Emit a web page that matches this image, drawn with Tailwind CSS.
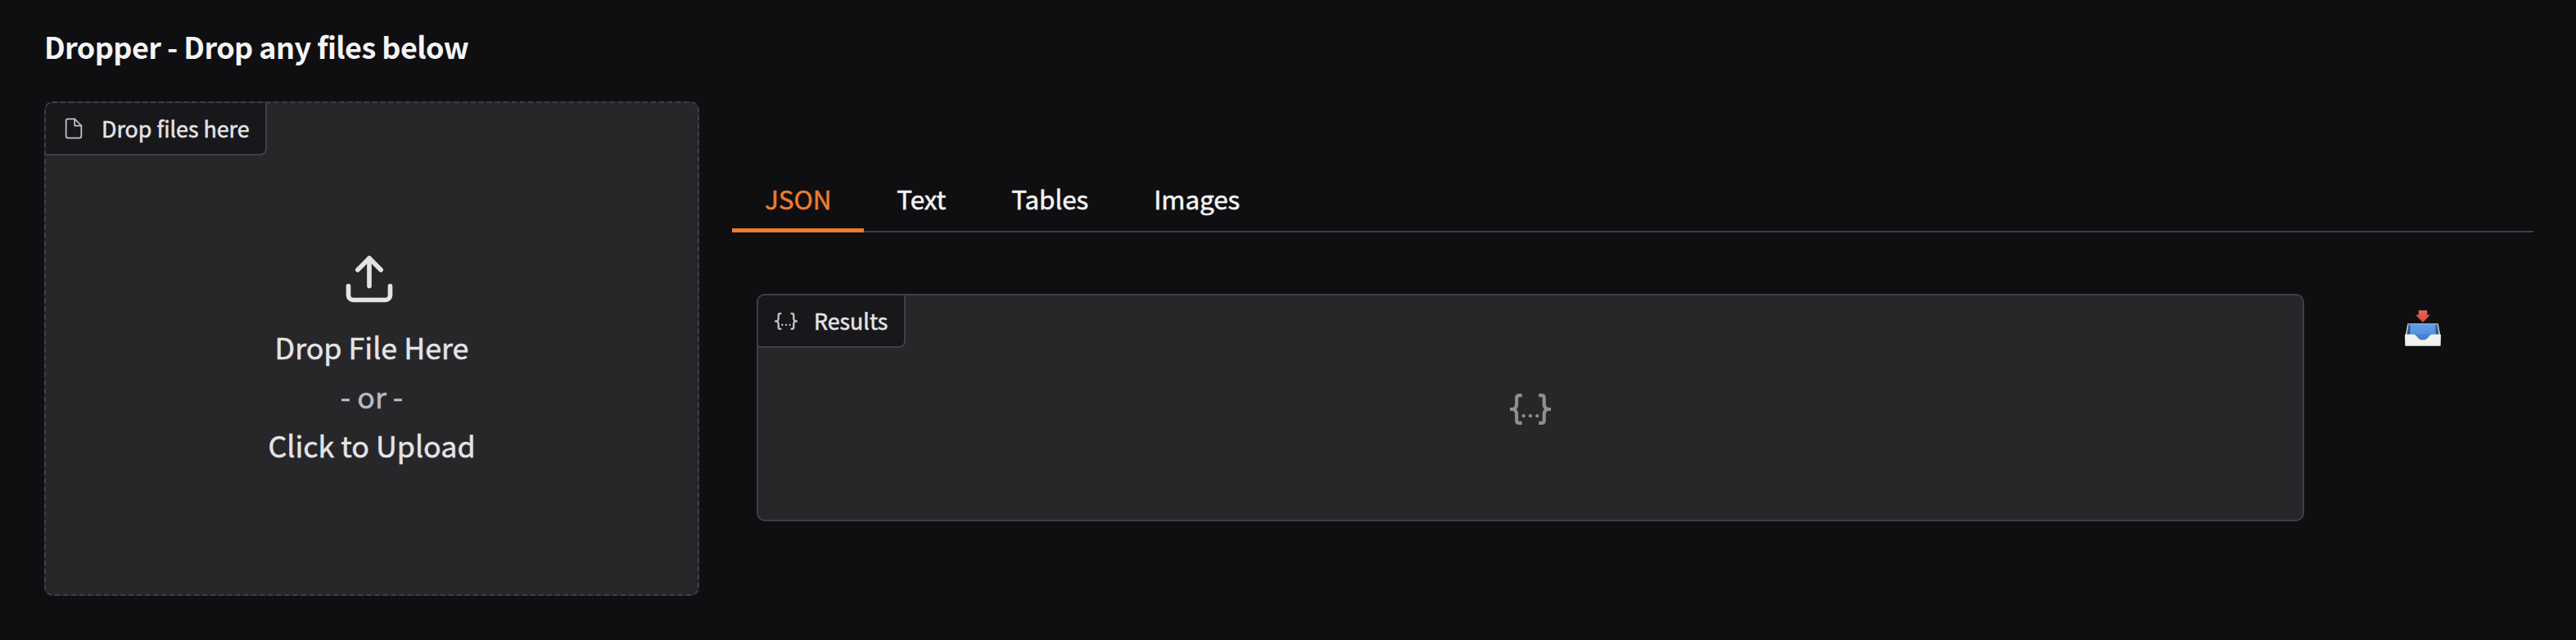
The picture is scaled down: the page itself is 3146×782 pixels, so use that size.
<!DOCTYPE html>
<html lang="en">
<head>
<meta charset="utf-8">
<title>Dropper</title>
<script src="https://cdn.jsdelivr.net/npm/@tailwindcss/browser@4"></script>
</head>
<body class="w-[3146px] h-[782px] overflow-hidden bg-[#0f0f11] font-['Noto_Sans_CJK_SC',sans-serif] text-[#e4e4e7] pl-[54px] pr-[52px] pt-[26px]">
<svg class="hidden">
  <symbol id="braces" viewBox="0 0 50 38">
    <g fill="none" stroke="currentColor" stroke-width="4.2">
      <path d="M14.7 2.1H11.4Q8.2 2.1 8.2 5.3V13Q8.2 16.5 5 19Q8.2 21.5 8.2 25V32.7Q8.2 35.9 11.4 35.9H14.7M0 19H5.5"/>
      <path d="M35.3 2.1H38.6Q41.8 2.1 41.8 5.3V13Q41.8 16.5 45 19Q41.8 21.5 41.8 25V32.7Q41.8 35.9 38.6 35.9H35.3M50 19H44.5"/>
    </g>
    <g fill="currentColor"><circle cx="16.7" cy="27.2" r="2.1"/><circle cx="25" cy="27.2" r="2.1"/><circle cx="33.3" cy="27.2" r="2.1"/></g>
  </symbol>
</svg>
<h1 class="text-[36px] leading-[60px] font-semibold tracking-[-0.58px] text-[#f4f4f5] whitespace-nowrap">Dropper - Drop any files below</h1>
<main class="mt-[38px] flex gap-10 items-start">
  <section class="w-[800px] h-[604px] shrink-0 rounded-[10px] border-2 border-dashed border-[#3f3f46] bg-[#27272a] flex flex-col items-center overflow-hidden">
    <div class="self-start h-16 w-[270px] border-r-2 border-b-2 border-[#3f3f46] rounded-br-[8px] bg-[#18181b] flex items-center pl-[20px] text-[26.8px] leading-[38px] whitespace-nowrap">
      <svg class="size-7 mr-[20px] shrink-0 text-[#c4c4c8]" viewBox="0 0 24 24" fill="none" stroke="currentColor" stroke-width="1.5" stroke-linecap="round" stroke-linejoin="round"><path d="M13 2H6a2 2 0 0 0-2 2v16a2 2 0 0 0 2 2h12a2 2 0 0 0 2-2V9z"/><path d="M13 2v7h7"/></svg>
      <span class="[-webkit-text-stroke:0.5px]">Drop files here</span>
    </div>
    <svg class="size-[68px] mt-[117px] mr-[7px] shrink-0" viewBox="0 0 24 24" fill="none" stroke="currentColor" stroke-width="2" stroke-linecap="round" stroke-linejoin="round"><path d="M21 15v4a2 2 0 0 1-2 2H5a2 2 0 0 1-2-2v-4"/><path d="M17 8l-5-5-5 5"/><path d="M12 3v12"/></svg>
    <div class="mt-[18px] text-center text-[35.8px] leading-[60px] whitespace-nowrap [-webkit-text-stroke:0.5px]">
      <p>Drop File Here</p>
      <p class="text-[#bbbbc2]">- or -</p>
      <p>Click to Upload</p>
    </div>
  </section>
  <section class="flex-1 pt-[76px]">
    <nav class="h-[84px] flex border-b-2 border-[#3f3f46] text-[31.5px] leading-[84px] tracking-[-0.12px] text-[#f4f4f5] whitespace-nowrap [-webkit-text-stroke:0.5px]">
      <div class="h-[84px] px-10 border-b-[5px] border-[#ec7c31] text-[#ec7c31]">JSON</div>
      <div class="px-10">Text</div>
      <div class="px-10">Tables</div>
      <div class="px-10">Images</div>
    </nav>
    <div class="mt-[75px] ml-[30px] flex items-start">
      <div class="w-[1890px] h-[278px] rounded-[10px] border-2 border-[#3f3f46] bg-[#27272a] overflow-hidden flex flex-col items-center">
        <div class="self-start h-16 w-[180px] border-r-2 border-b-2 border-[#3f3f46] rounded-br-[8px] bg-[#18181b] flex items-center pl-[20px] text-[26.8px] leading-[38px] whitespace-nowrap">
          <svg class="w-7 h-[21px] mr-[20px] shrink-0 text-[#c4c4c8]"><use href="#braces"/></svg>
          <span class="[-webkit-text-stroke:0.5px]">Results</span>
        </div>
        <svg class="w-[50px] h-[38px] mt-14 shrink-0 text-[#8f8f92]"><use href="#braces"/></svg>
      </div>
      <svg class="w-[46px] h-[46px] ml-[122px] mt-[20px] shrink-0" viewBox="0 0 46 46">
        <defs>
          <linearGradient id="well" x1="0" y1="0" x2="0" y2="1"><stop offset="0" stop-color="#5f9de9"/><stop offset=".55" stop-color="#5592e0"/><stop offset=".6" stop-color="#4883cd"/><stop offset="1" stop-color="#437fcb"/></linearGradient>
          <linearGradient id="arrow" x1="0" y1="0" x2="0" y2="1"><stop offset="0" stop-color="#ea6556"/><stop offset="1" stop-color="#d94538"/></linearGradient>
        </defs>
        <path d="M4.3 16.2H41.7L44.6 32H1.4z" fill="#c9c8c0"/>
        <path d="M5.8 17.2H40.2L42.6 31L38 38H8L3.4 31z" fill="url(#well)"/>
        <path d="M5.8 17.2L7.4 17.2L7.2 29.4L3.4 31zM40.2 17.2L38.6 17.2L38.8 29.4L42.6 31z" fill="#2c5488"/>
        <path d="M1 30.4Q1 29.4 2 29.4H11C16 29.4 16 36.4 23 36.4S30 29.4 35 29.4H44Q45 29.4 45 30.4L44.7 43Q44.7 43.7 43.8 43.7H2.2Q1.3 43.7 1.3 43z" fill="#f1f1ed"/>
        <path d="M17.8 .3H28.2V5.7H31.9L23 15.1L14.1 5.7H17.8z" fill="url(#arrow)"/>
      </svg>
    </div>
  </section>
</main>
</body>
</html>
